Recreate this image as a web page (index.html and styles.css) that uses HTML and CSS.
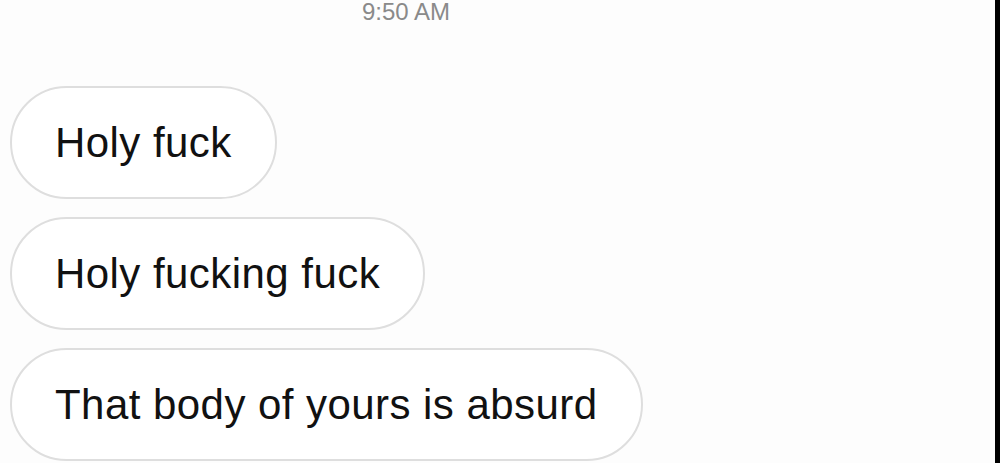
FILE: index.html
```html
<!doctype html>
<html lang="en">
  <head>
    <meta charset="UTF-8" />
    <meta name="viewport" content="width=device-width, initial-scale=1.0" />
    <title>Messages</title>
    <link rel="stylesheet" href="styles.css">
  </head>
  <body>
    <div class="screen">
      <div class="thread">
        <div class="timestamp">9:50 AM</div>

        <div class="messages">
          <div class="bubble">Holy fuck</div>
          <div class="bubble">Holy fucking fuck</div>
          <div class="bubble">That body of yours is absurd</div>
        </div>
      </div>
      <div class="edge"></div>
    </div>
  </body>
</html>
```

FILE: styles.css
```css
* {
  margin: 0;
  padding: 0;
  box-sizing: border-box;
}

body {
  font-family: "Liberation Sans", Arial, sans-serif;
  background: #fff;
  height: 463px;
  overflow: hidden;
}

.screen {
  display: flex;
  height: 463px;
}

.thread {
  flex: 1;
  background: #fdfdfd;
}

.edge {
  width: 5px;
  background: #000;
}

.timestamp {
  padding-left: 362px;
  font-size: 24px;
  line-height: 24px;
  color: #8a8a8a;
}

.messages {
  display: flex;
  flex-direction: column;
  align-items: flex-start;
  gap: 18px;
  margin-top: 62px;
  padding-left: 10px;
}

.bubble {
  background: #fff;
  border: 2px solid #dedede;
  border-radius: 60px;
  padding: 30px 43px;
  font-size: 42px;
  line-height: 49px;
  letter-spacing: 0.45px;
  color: #111;
  white-space: nowrap;
}
```
